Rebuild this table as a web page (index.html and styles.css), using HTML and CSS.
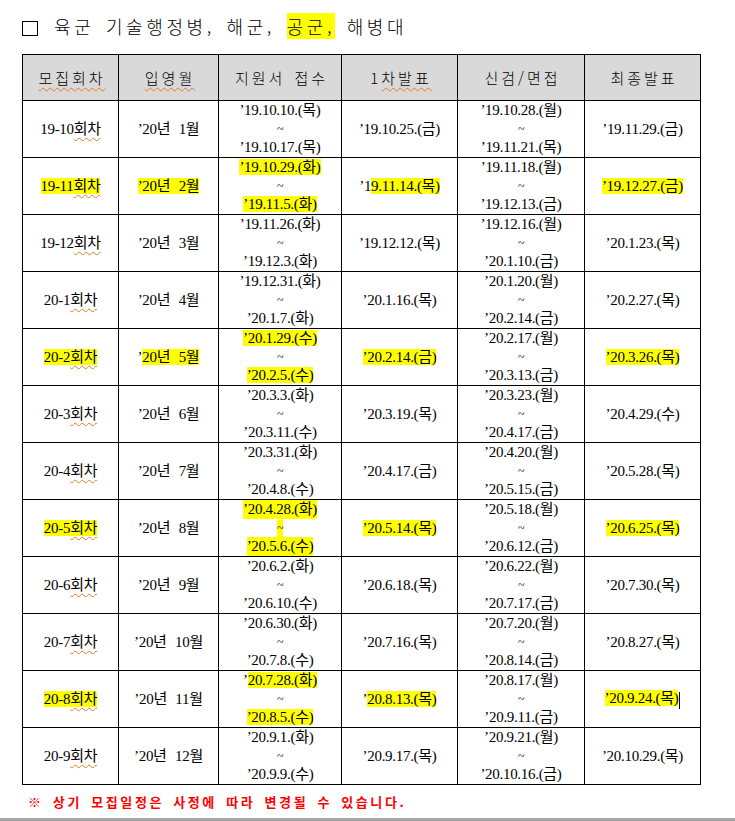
FILE: index.html
```html
<!DOCTYPE html>
<html lang="ko">
<head>
<meta charset="utf-8">
<link rel="stylesheet" href="styles.css">
</head>
<body>
<div class="page">
  <div class="title"><span class="box"></span><span class="ttext">육군 기술행정병, 해군, <span class="hl">공군,</span> 해병대</span></div>
  <table class="sched">
    <colgroup>
      <col class="c1"><col class="c2"><col class="c3"><col class="c4"><col class="c5"><col class="c6">
    </colgroup>
    <thead>
      <tr>
        <th><span class="sp">모집회차</span></th>
        <th><span class="sp">입영월</span></th>
        <th>지원서 접수</th>
        <th>1<span class="sp">차발표</span></th>
        <th>신검/면접</th>
        <th>최종발표</th>
      </tr>
    </thead>
    <tbody>
      <tr>
        <td>19-10<span class="sp">회차</span></td>
        <td>’20년 1월</td>
        <td><div class="ln">’19.10.10.(목)</div><div class="ln tl">~</div><div class="ln">’19.10.17.(목)</div></td>
        <td>’19.10.25.(금)</td>
        <td><div class="ln">’19.10.28.(월)</div><div class="ln tl">~</div><div class="ln">’19.11.21.(목)</div></td>
        <td>’19.11.29.(금)</td>
      </tr>
      <tr>
        <td><span class="hl">19-11<span class="sp">회차</span></span></td>
        <td><span class="hl">’20년 2월</span></td>
        <td><div class="ln"><span class="hl">’19.10.29.(화)</span></div><div class="ln tl">~</div><div class="ln"><span class="hl">’19.11.5.(화)</span></div></td>
        <td>’1<span class="hl">9.11.14.(목)</span></td>
        <td><div class="ln">’19.11.18.(월)</div><div class="ln tl">~</div><div class="ln">’19.12.13.(금)</div></td>
        <td><span class="hl">’19.12.27.(금)</span></td>
      </tr>
      <tr>
        <td>19-12<span class="sp">회차</span></td>
        <td>’20년 3월</td>
        <td><div class="ln">’19.11.26.(화)</div><div class="ln tl">~</div><div class="ln">’19.12.3.(화)</div></td>
        <td>’19.12.12.(목)</td>
        <td><div class="ln">’19.12.16.(월)</div><div class="ln tl">~</div><div class="ln">’20.1.10.(금)</div></td>
        <td>’20.1.23.(목)</td>
      </tr>
      <tr>
        <td>20-1<span class="sp">회차</span></td>
        <td>’20년 4월</td>
        <td><div class="ln">’19.12.31.(화)</div><div class="ln tl">~</div><div class="ln">’20.1.7.(화)</div></td>
        <td>’20.1.16.(목)</td>
        <td><div class="ln">’20.1.20.(월)</div><div class="ln tl">~</div><div class="ln">’20.2.14.(금)</div></td>
        <td>’20.2.27.(목)</td>
      </tr>
      <tr>
        <td><span class="hl">20-2<span class="sp">회차</span></span></td>
        <td>’<span class="hl">20년 5월</span></td>
        <td><div class="ln"><span class="hl">’20.1.29.(수)</span></div><div class="ln tl">~</div><div class="ln"><span class="hl">’20.2.5.(수)</span></div></td>
        <td><span class="hl">’20.2.14.(금)</span></td>
        <td><div class="ln">’20.2.17.(월)</div><div class="ln tl">~</div><div class="ln">’20.3.13.(금)</div></td>
        <td><span class="hl">’20.3.26.(목)</span></td>
      </tr>
      <tr>
        <td>20-3<span class="sp">회차</span></td>
        <td>’20년 6월</td>
        <td><div class="ln">’20.3.3.(화)</div><div class="ln tl">~</div><div class="ln">’20.3.11.(수)</div></td>
        <td>’20.3.19.(목)</td>
        <td><div class="ln">’20.3.23.(월)</div><div class="ln tl">~</div><div class="ln">’20.4.17.(금)</div></td>
        <td>’20.4.29.(수)</td>
      </tr>
      <tr>
        <td>20-4<span class="sp">회차</span></td>
        <td>’20년 7월</td>
        <td><div class="ln">’20.3.31.(화)</div><div class="ln tl">~</div><div class="ln">’20.4.8.(수)</div></td>
        <td>’20.4.17.(금)</td>
        <td><div class="ln">’20.4.20.(월)</div><div class="ln tl">~</div><div class="ln">’20.5.15.(금)</div></td>
        <td>’20.5.28.(목)</td>
      </tr>
      <tr>
        <td><span class="hl">20-5<span class="sp">회차</span></span></td>
        <td>’20년 8월</td>
        <td><div class="ln"><span class="hl blk">’20.4.28.(화)</span></div><div class="ln tl"><span class="hl blk">~</span></div><div class="ln"><span class="hl blk">’20.5.6.(수)</span></div></td>
        <td><span class="hl">’20.5.14.(목)</span></td>
        <td><div class="ln">’20.5.18.(월)</div><div class="ln tl">~</div><div class="ln">’20.6.12.(금)</div></td>
        <td><span class="hl">’20.6.25.(목)</span></td>
      </tr>
      <tr>
        <td>20-6<span class="sp">회차</span></td>
        <td>’20년 9월</td>
        <td><div class="ln">’20.6.2.(화)</div><div class="ln tl">~</div><div class="ln">’20.6.10.(수)</div></td>
        <td>’20.6.18.(목)</td>
        <td><div class="ln">’20.6.22.(월)</div><div class="ln tl">~</div><div class="ln">’20.7.17.(금)</div></td>
        <td>’20.7.30.(목)</td>
      </tr>
      <tr>
        <td>20-7<span class="sp">회차</span></td>
        <td>’20년 10월</td>
        <td><div class="ln">’20.6.30.(화)</div><div class="ln tl">~</div><div class="ln">’20.7.8.(수)</div></td>
        <td>’20.7.16.(목)</td>
        <td><div class="ln">’20.7.20.(월)</div><div class="ln tl">~</div><div class="ln">’20.8.14.(금)</div></td>
        <td>’20.8.27.(목)</td>
      </tr>
      <tr>
        <td><span class="hl">20-8<span class="sp">회차</span></span></td>
        <td>’20년 11월</td>
        <td><div class="ln">’<span class="hl">20.7.28.(화)</span></div><div class="ln tl">~</div><div class="ln"><span class="hl">’20.8.5.(수)</span></div></td>
        <td>’<span class="hl">20.8.13.(목)</span></td>
        <td><div class="ln">’20.8.17.(월)</div><div class="ln tl">~</div><div class="ln">’20.9.11.(금)</div></td>
        <td><span class="hl">’20.9.24.(목)</span><span class="caret"></span></td>
      </tr>
      <tr>
        <td>20-9<span class="sp">회차</span></td>
        <td>’20년 12월</td>
        <td><div class="ln">’20.9.1.(화)</div><div class="ln tl">~</div><div class="ln">’20.9.9.(수)</div></td>
        <td>’20.9.17.(목)</td>
        <td><div class="ln">’20.9.21.(월)</div><div class="ln tl">~</div><div class="ln">’20.10.16.(금)</div></td>
        <td>’20.10.29.(목)</td>
      </tr>
    </tbody>
  </table>
  <div class="note">※ 상기 모집일정은 사정에 따라 변경될 수 있습니다.</div>
</div>
<div class="bottombar"></div>
</body>
</html>
```

FILE: styles.css
```css
html, body {
  margin: 0;
  padding: 0;
  background: #ffffff;
}
body {
  width: 735px;
  height: 821px;
  position: relative;
  overflow: hidden;
  font-family: "Liberation Serif", "Noto Sans CJK KR", serif;
  color: #000;
}
.page {
  padding-left: 22px;
}
.title {
  height: 54px;
  display: flex;
  align-items: center;
  font-family: "Noto Sans CJK KR", "Noto Sans", sans-serif;
  font-size: 18px;
  font-weight: 300;
  letter-spacing: 3.6px;
  word-spacing: 3px;
  line-height: 20px;
}
.box {
  display: inline-block;
  width: 16px;
  height: 15px;
  border: 1px solid #000;
  box-sizing: border-box;
  margin-right: 16px;
  margin-top: 2px;
}
.ttext {
  padding-bottom: 2px;
}
.hl {
  background: #ffff00;
}
.sched {
  border-collapse: collapse;
  table-layout: fixed;
  width: 679px;
}
.c1 { width: 96px; }
.c2 { width: 100px; }
.c3 { width: 123px; }
.c4 { width: 116px; }
.c5 { width: 127px; }
.c6 { width: 116px; }
.sched th {
  background: #d9d9d9;
  border: 1px solid #000;
  height: 45px;
  padding: 0;
  font-family: "Noto Sans CJK KR", sans-serif;
  font-weight: 300;
  font-size: 15px;
  letter-spacing: 3px;
  text-indent: 3px;
  word-spacing: 2px;
}
.sched td {
  border: 1px solid #000;
  height: 56px;
  padding: 0;
  text-align: center;
  vertical-align: middle;
  font-size: 15px;
  line-height: 19px;
  letter-spacing: -0.3px;
  word-spacing: 5px;
  white-space: nowrap;
}
.ln {
  height: 19px;
  line-height: 19px;
  overflow: visible;
}
.ln.tl {
  height: 18px;
  line-height: 18px;
  font-size: 12px;
}
.sp {
  text-decoration: underline wavy #e07b2a;
  text-decoration-thickness: 1px;
  text-underline-offset: 3px;
}
.blk {
  padding: 1px 0 2px;
}
.caret {
  display: inline-block;
  width: 1px;
  height: 17px;
  background: #000;
  vertical-align: middle;
  margin-left: 1px;
}
.note {
  padding-left: 6px;
  height: 32px;
  display: flex;
  align-items: center;
  font-family: "Noto Sans CJK KR", sans-serif;
  font-weight: 700;
  font-size: 13px;
  letter-spacing: 2.6px;
  word-spacing: 3px;
  color: #ff0000;
}
.bottombar {
  position: absolute;
  left: 0;
  right: 0;
  bottom: 0;
  height: 3px;
  background: #a6a6a6;
}
```
